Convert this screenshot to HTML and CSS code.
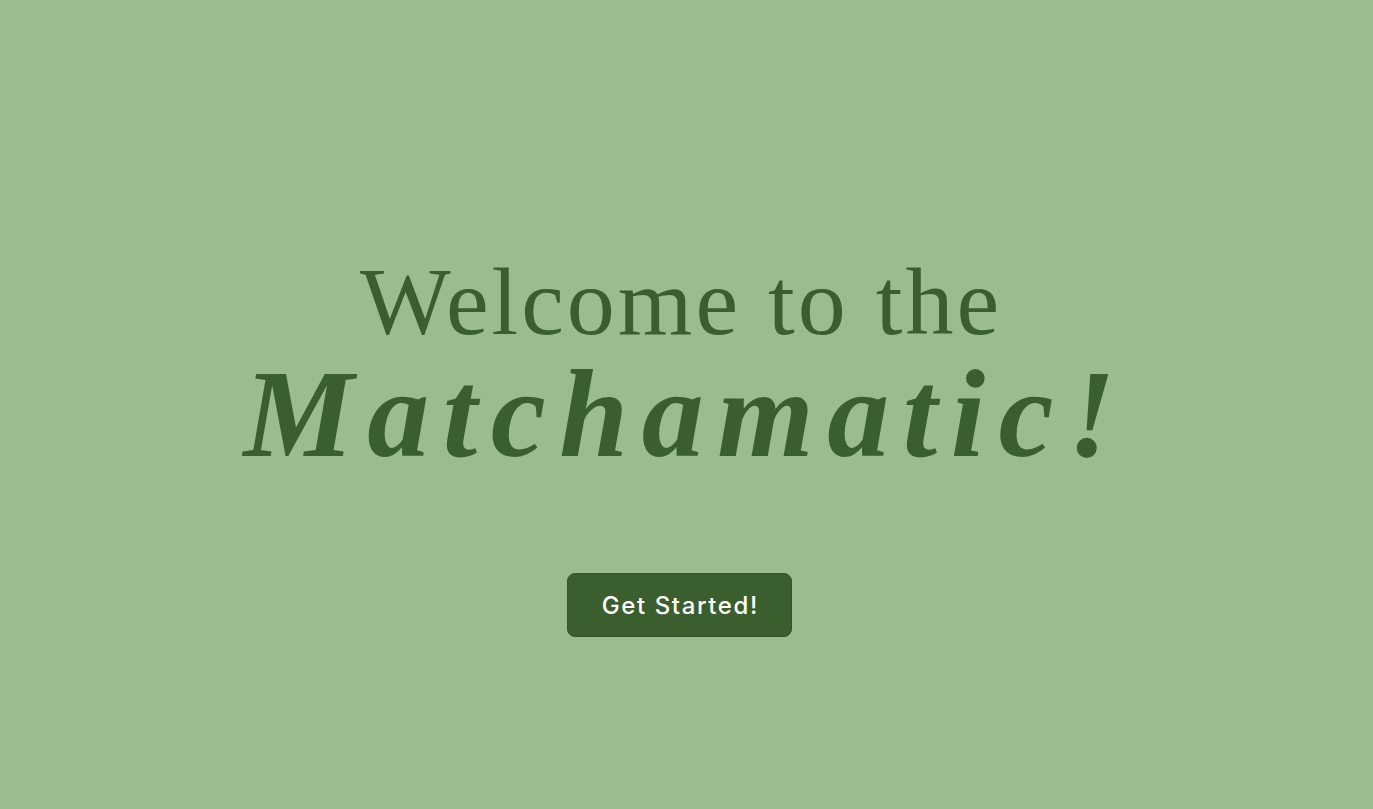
FILE: index.html
```html
<!DOCTYPE html>
<html lang="en">
<head>
<meta charset="utf-8">
<title>Matchamatic</title>
<link rel="stylesheet" href="styles.css">
</head>
<body>
<main class="hero">
  <h1 class="title">
    <span class="title-top">Welcome to the</span>
    <span class="title-brand">Matchamatic!</span>
  </h1>
  <button class="start-btn" type="button">Get Started!</button>
</main>
</body>
</html>
```

FILE: styles.css
```css
html, body {
  margin: 0;
  padding: 0;
  background: #9abc8f;
}
.hero {
  box-sizing: border-box;
  height: 809px;
  padding-top: 254px;
  padding-right: 14px;
  display: flex;
  flex-direction: column;
  align-items: center;
}
.title {
  margin: 0;
  display: flex;
  flex-direction: column;
  align-items: center;
  color: #3a5e2d;
  font-family: "Liberation Serif", "Times New Roman", serif;
  font-weight: normal;
}
.title-top {
  font-size: 96px;
  line-height: 1;
  letter-spacing: 3px;
  padding-left: 3px;
}
.title-brand {
  margin-top: 3px;
  font-size: 124px;
  line-height: 1;
  font-weight: bold;
  font-style: italic;
  letter-spacing: 13.5px;
  padding-left: 13.5px;
}
.start-btn {
  margin-top: 96px;
  width: 225px;
  height: 64px;
  border: 1px solid #335427;
  border-radius: 8px;
  background: #3a5e2d;
  color: #ffffff;
  font-family: "Inter", "Liberation Sans", sans-serif;
  font-size: 24px;
  font-weight: 500;
  letter-spacing: 1.6px;
  padding: 0 0 0 1.6px;
  cursor: pointer;
}
```
